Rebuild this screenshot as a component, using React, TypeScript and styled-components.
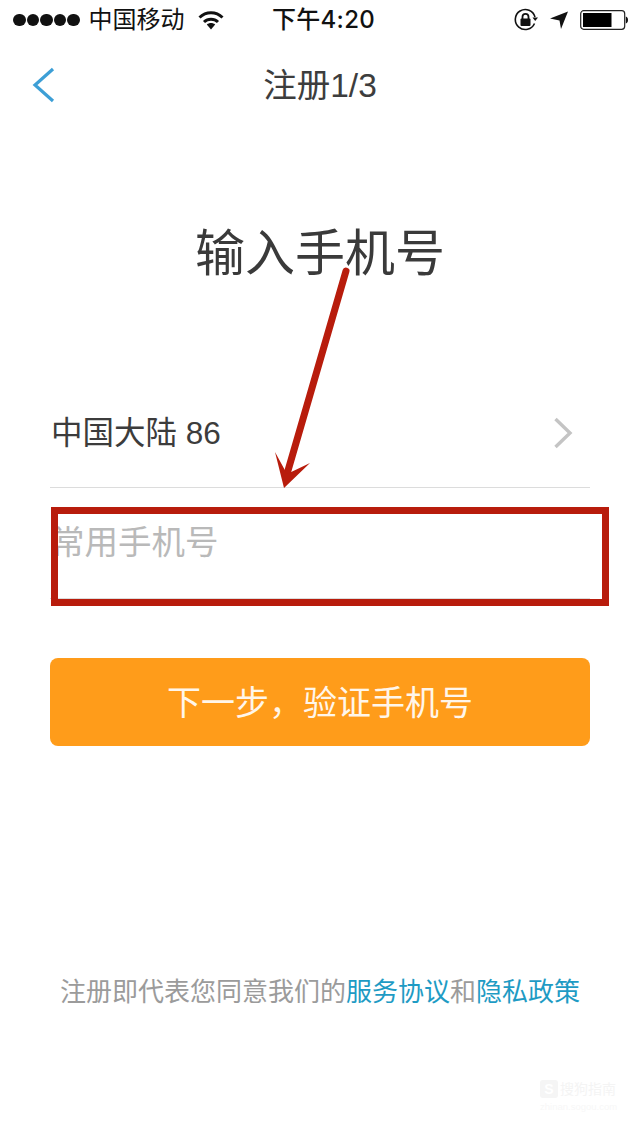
import styled, { createGlobalStyle } from "styled-components";

const SANS = `"Liberation Sans", "Noto Sans CJK SC", sans-serif`;

const Global = createGlobalStyle`
  html, body { margin: 0; padding: 0; background: #fff; }
  * { box-sizing: border-box; }
`;

const Page = styled.div`
  position: relative;
  width: 640px;
  height: 1136px;
  overflow: hidden;
  background: #fff;
  font-family: ${SANS};
  color: #3a3a3a;
`;

const StatusBar = styled.div`
  display: grid;
  grid-template-columns: 1fr auto 1fr;
  align-items: center;
  height: 40px;
  padding: 0 12px 0 13px;
  color: #111;
`;
const StatusLeft = styled.div`
  display: flex;
  align-items: center;
`;
const StatusRight = styled.div`
  display: flex;
  align-items: center;
  justify-content: flex-end;
  gap: 12px;
`;
const Dots = styled.div`
  display: flex;
  gap: 1px;
  margin-right: 9px;
`;
const Dot = styled.span`
  width: 12.5px;
  height: 12.5px;
  border-radius: 50%;
  background: #111;
`;
const Carrier = styled.span`
  font-size: 24px;
  line-height: 40px;
  margin-right: 13px;
`;
const Clock = styled.span`
  margin-left: 6px;
  font-family: Inter, "Noto Sans CJK SC", sans-serif;
  font-size: 24px;
  line-height: 40px;
  font-weight: 500;
  letter-spacing: 0.3px;
`;

const Nav = styled.div`
  position: relative;
  display: flex;
  align-items: center;
  justify-content: center;
  height: 90px;
`;
const NavTitle = styled.h1`
  margin: 2px 0 0;
  font-size: 33.5px;
  font-weight: 400;
  line-height: 86px;
  color: #3d3d3d;
`;
const BackIcon = styled.svg`
  position: absolute;
  left: 32px;
  top: 27px;
`;

const Heading = styled.h2`
  margin: 86px 0 0;
  height: 76px;
  font-size: 50px;
  font-weight: 400;
  line-height: 76px;
  text-align: center;
  color: #3a3a3a;
`;

const Form = styled.div`
  display: flex;
  flex-direction: column;
  margin: 0 50px;
  padding-top: 85px;
`;
const CountryRow = styled.div`
  display: flex;
  align-items: center;
  justify-content: space-between;
  height: 111px;
  padding: 0 17px 4px 1px;
  border-bottom: 1px solid #dcdcdc;
  font-size: 31.5px;
  color: #3c3c3c;
`;
const Chevron = styled.svg`
  margin-top: 6px;
`;
const PhoneRow = styled.div`
  display: flex;
  align-items: flex-start;
  height: 111px;
  padding: 31px 1px 0;
  border-bottom: 1px solid #dcdcdc;
  font-size: 33.5px;
  line-height: 48px;
  color: #b9b9b9;
`;
const NextButton = styled.button`
  height: 88px;
  margin-top: 59px;
  padding: 0 0 4px;
  border: 0;
  border-radius: 8px;
  background: #ff9c1a;
  color: #fff6ea;
  font-family: ${SANS};
  font-size: 34px;
`;

const Terms = styled.p`
  margin: 224px 0 0;
  font-size: 26px;
  line-height: 44px;
  text-align: center;
  color: #9b9b9b;
`;
const TermsLink = styled.span`
  color: #1e9bc4;
`;

const RedBox = styled.div`
  position: absolute;
  left: 51px;
  top: 507px;
  width: 558px;
  height: 99px;
  border: 7px solid #b81c0c;
`;
const Arrow = styled.svg`
  position: absolute;
  left: 270px;
  top: 260px;
`;
const Watermark = styled.div`
  position: absolute;
  left: 540px;
  top: 1080px;
  display: flex;
  flex-direction: column;
  gap: 4px;
  color: #f4f4f4;
`;
const MarkRow = styled.div`
  display: flex;
  align-items: center;
  gap: 2px;
  font-size: 14px;
  line-height: 18px;
`;
const MarkBadge = styled.span`
  display: flex;
  align-items: center;
  justify-content: center;
  width: 18px;
  height: 18px;
  border-radius: 3px;
  background: #f5f5f5;
  color: #fff;
  font-size: 14px;
  font-weight: 700;
`;
const MarkUrl = styled.span`
  font-size: 9.5px;
  line-height: 10px;
  color: #f7f7f7;
`;

const App = () => (
  <Page>
    <Global />
    <StatusBar>
      <StatusLeft>
        <Dots>
          {[0, 1, 2, 3, 4].map((i) => (
            <Dot key={i} />
          ))}
        </Dots>
        <Carrier>中国移动</Carrier>
        <svg width="26" height="20" viewBox="0 0 26 20">
          <path d="M1.5 7.5C8 1.2 18 1.2 24.5 7.5" fill="none" stroke="#111" strokeWidth="3" />
          <path d="M6 12c4-3.8 10-3.8 14 0" fill="none" stroke="#111" strokeWidth="3" />
          <path d="M8.8 14.6c2.5-2 5.9-2 8.4 0L13 19.5z" fill="#111" />
        </svg>
      </StatusLeft>
      <Clock>下午4:20</Clock>
      <StatusRight>
        <svg width="24" height="24" viewBox="0 0 24 24">
          <path d="M20.5 15.5A10 10 0 1 1 21 9" fill="none" stroke="#111" strokeWidth="1.6" />
          <path d="M18.5 9.5h5.5l-2.8 3.6z" fill="#111" />
          <rect x="6.5" y="10.5" width="10" height="7.5" rx="1" fill="#111" />
          <path d="M8.5 11V8.8a3 3 0 0 1 6 0V11" fill="none" stroke="#111" strokeWidth="1.8" />
        </svg>
        <svg width="18" height="18" viewBox="0 0 18 18">
          <path d="M18 0.5L11 18L9.5 9.5L0 7.5z" fill="#111" />
        </svg>
        <svg width="48" height="20" viewBox="0 0 48 20">
          <rect x="0.7" y="0.7" width="44" height="18.6" rx="3" fill="none" stroke="#222" strokeWidth="1.2" />
          <rect x="3" y="3" width="28.5" height="14" fill="#000" />
          <path d="M45.8 6.5c1.5.4 2.2 1.8 2.2 3.5s-.7 3.1-2.2 3.5z" fill="#111" />
        </svg>
      </StatusRight>
    </StatusBar>

    <Nav>
      <BackIcon width="24" height="36" viewBox="0 0 24 36">
        <path d="M21 2L3 18l18 16" fill="none" stroke="#3d9fd6" strokeWidth="3.2" />
      </BackIcon>
      <NavTitle>注册1/3</NavTitle>
    </Nav>

    <Heading>输入手机号</Heading>

    <Form>
      <CountryRow>
        <span>中国大陆 86</span>
        <Chevron width="20" height="32" viewBox="0 0 20 32">
          <path d="M2.5 2L17 16 2.5 30" fill="none" stroke="#c4c4c4" strokeWidth="3.4" />
        </Chevron>
      </CountryRow>
      <PhoneRow>常用手机号</PhoneRow>
      <NextButton>下一步，验证手机号</NextButton>
    </Form>

    <Terms>
      注册即代表您同意我们的<TermsLink>服务协议</TermsLink>和<TermsLink>隐私政策</TermsLink>
    </Terms>

    <RedBox />
    <Arrow width="84" height="232" viewBox="0 0 84 232">
      <path d="M76 11L17 214" fill="none" stroke="#b81c0c" strokeWidth="7" strokeLinecap="round" />
      <path d="M5 192L14 228L40 203L17 214z" fill="#b81c0c" />
    </Arrow>
    <Watermark>
      <MarkRow>
        <MarkBadge>S</MarkBadge>
        <span>搜狗指南</span>
      </MarkRow>
      <MarkUrl>zhinan.sogou.com</MarkUrl>
    </Watermark>
  </Page>
);

export default App;
